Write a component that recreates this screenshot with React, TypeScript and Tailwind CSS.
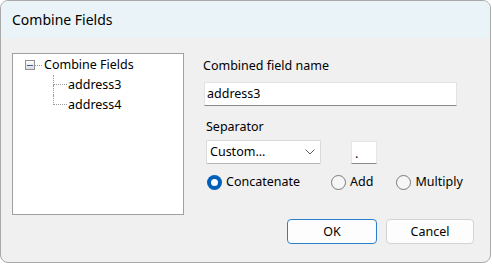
import React from "react";

const font = { fontFamily: '"Noto Sans", "Liberation Sans", sans-serif' };

function Radio({ checked, label }: { checked?: boolean; label: string }) {
  return (
    <div className="flex items-center">
      {checked ? (
        <div className="w-[15px] h-[15px] rounded-full bg-[#005fb8] flex items-center justify-center">
          <div className="w-[7px] h-[7px] rounded-full bg-white" />
        </div>
      ) : (
        <div className="w-[15px] h-[15px] rounded-full border border-[#7a7a7a] bg-[#f6f6f6]" />
      )}
      <span className="ml-[4px] leading-[16px]">{label}</span>
    </div>
  );
}

export default function App() {
  return (
    <div className="w-[492px] h-[264px] bg-white text-black text-[12.5px]" style={font}>
      <div className="w-[491px] h-[263px] rounded-[8px] border border-[#a9a9a9] overflow-hidden flex flex-col bg-[#f0f0f0]">
        <div className="h-[37px] shrink-0 bg-[#eaf4f8] flex items-center pl-[11px] text-[14px]">
          Combine Fields
        </div>
        <div className="flex-1 flex flex-col pl-[11px] pt-[15px] pr-[16px]">
          <div className="flex">
            <div className="w-[172px] h-[162px] bg-white border border-[#a0a0a0] pt-[1px]">
              <div className="flex items-center h-[20px] pl-[12px]">
                <div className="w-[10px] h-[10px] border border-[#919191] bg-gradient-to-b from-white to-[#dcdcdc] flex items-center justify-center">
                  <div className="w-[6px] h-[1px] bg-[#3e5ea0]" />
                </div>
                <div className="w-[7px] border-t border-dotted border-[#9a9a9a]" />
                <span className="ml-[2px]">Combine Fields</span>
              </div>
              <div className="pl-[40px]">
                <div className="flex h-[20px]">
                  <div className="w-[14px] flex flex-col">
                    <div className="h-[10px] border-l border-b border-dotted border-[#9a9a9a]" />
                    <div className="h-[10px] border-l border-dotted border-[#9a9a9a]" />
                  </div>
                  <span className="ml-[1px] leading-[20px]">address3</span>
                </div>
                <div className="flex h-[20px]">
                  <div className="w-[14px] flex flex-col">
                    <div className="h-[10px] border-l border-b border-dotted border-[#9a9a9a]" />
                  </div>
                  <span className="ml-[1px] leading-[20px]">address4</span>
                </div>
              </div>
            </div>
            <div className="ml-[19px] pt-[5px] flex flex-col">
              <div className="leading-[16px]">Combined field name</div>
              <div className="mt-[8px] ml-[1px] w-[253px] h-[24px] bg-white border border-[#e3e3e3] border-b-[#8a8a8a] flex items-center pl-[2px] leading-[16px]">
                address3
              </div>
              <div className="ml-[3px] mt-[13px] leading-[16px]">Separator</div>
              <div className="ml-[3px] mt-[5px] flex items-start">
                <div className="w-[115px] h-[24px] bg-white border border-[#d9d9d9] border-b-[#b5b5b5] rounded-[2px] flex items-center justify-between pl-[3px] pr-[5px]">
                  <span className="leading-[16px]">Custom...</span>
                  <svg width="10" height="6" viewBox="0 0 10 6" fill="none">
                    <path d="M0.5 0.5 L5 5 L9.5 0.5" stroke="#5f5f5f" strokeWidth="1" />
                  </svg>
                </div>
                <div className="ml-[30px] mt-[1px] w-[26px] h-[23px] bg-white border border-[#e6e6e6] border-b-[#8a8a8a] pl-[3px] flex items-end">
                  <span className="leading-[18px]">.</span>
                </div>
              </div>
              <div className="ml-[4px] mt-[10px] flex items-center">
                <Radio checked label="Concatenate" />
                <div className="ml-[31px]">
                  <Radio label="Add" />
                </div>
                <div className="ml-[23px]">
                  <Radio label="Multiply" />
                </div>
              </div>
            </div>
          </div>
          <div className="mt-[4px] flex justify-end gap-[9px]">
            <button className="w-[90px] h-[25px] rounded-[4px] bg-[#fdfdfd] border border-[#2f7fcf] flex items-center justify-center leading-[16px]">
              OK
            </button>
            <button className="w-[88px] h-[25px] rounded-[4px] bg-[#fdfdfd] border border-[#d3d3d3] flex items-center justify-center leading-[16px]">
              Cancel
            </button>
          </div>
        </div>
      </div>
    </div>
  );
}
